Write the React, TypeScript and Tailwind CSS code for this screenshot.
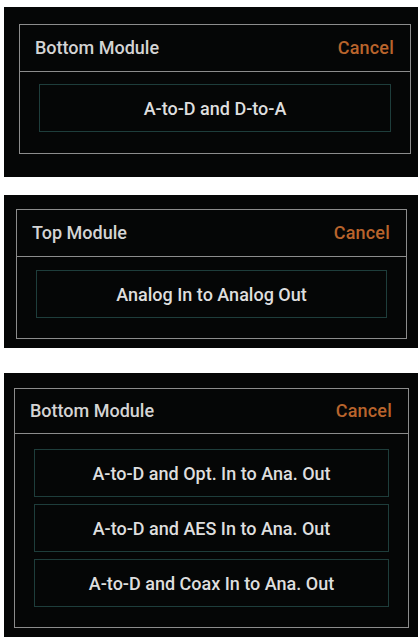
// Module picker dialogs — three stacked screenshots of the same dark sheet
type Sheet = {
  title: string;
  options: string[];
  outer: string;
  box: string;
  header: string;
  list: string;
};

const sheets: Sheet[] = [
  {
    title: 'Bottom Module',
    options: ['A-to-D and D-to-A'],
    outer: 'mt-[7px] h-[170px] pl-[15px] pr-[7px] pt-[17px]',
    box: 'h-[130px]',
    header: 'h-[47px]',
    list: 'pt-[12px] px-[19px] gap-[7px]',
  },
  {
    title: 'Top Module',
    options: ['Analog In to Analog Out'],
    outer: 'mt-[18px] h-[153px] pl-[12px] pr-[11px] pt-[14px]',
    box: 'h-[130px]',
    header: 'h-[47px]',
    list: 'pt-[13px] px-[19px] gap-[7px]',
  },
  {
    title: 'Bottom Module',
    options: [
      'A-to-D and Opt. In to Ana. Out',
      'A-to-D and AES In to Ana. Out',
      'A-to-D and Coax In to Ana. Out',
    ],
    outer: 'mt-[25px] h-[264px] pl-[10px] pr-[9px] pt-[15px]',
    box: 'h-[240px]',
    header: 'h-[45px]',
    list: 'pt-[15px] px-[19px] gap-[7px]',
  },
];

function ModuleSheet({ sheet }: { sheet: Sheet }) {
  return (
    <div className={`ml-[4px] bg-[#050606] ${sheet.outer}`}>
      <div className={`border-[1.5px] border-[#8c8c8c] flex flex-col ${sheet.box}`}>
        {/* Header */}
        <div className={`flex items-center justify-between pl-[15px] pr-[16px] border-b-[1.5px] border-[#8c8c8c] text-[18px] leading-[24px] font-medium ${sheet.header}`}>
          <span className="text-[#d4d4d4]">{sheet.title}</span>
          <span className="text-[#b9642c] tracking-[0.2px]">Cancel</span>
        </div>
        {/* Options */}
        <div className={`flex flex-col ${sheet.list}`}>
          {sheet.options.map(opt => (
            <div
              key={opt}
              className="h-[48px] border-[1.5px] border-[#1e3d3b] flex items-center justify-center text-[#dedede] text-[18px] font-medium"
            >
              {opt}
            </div>
          ))}
        </div>
      </div>
    </div>
  );
}

export default function App() {
  return (
    <div
      className="w-[418px] h-[637px] bg-white overflow-hidden flex flex-col"
      style={{ fontFamily: 'Roboto, "Noto Sans", sans-serif' }}
    >
      {sheets.map((s, i) => (
        <ModuleSheet key={i} sheet={s} />
      ))}
    </div>
  );
}
